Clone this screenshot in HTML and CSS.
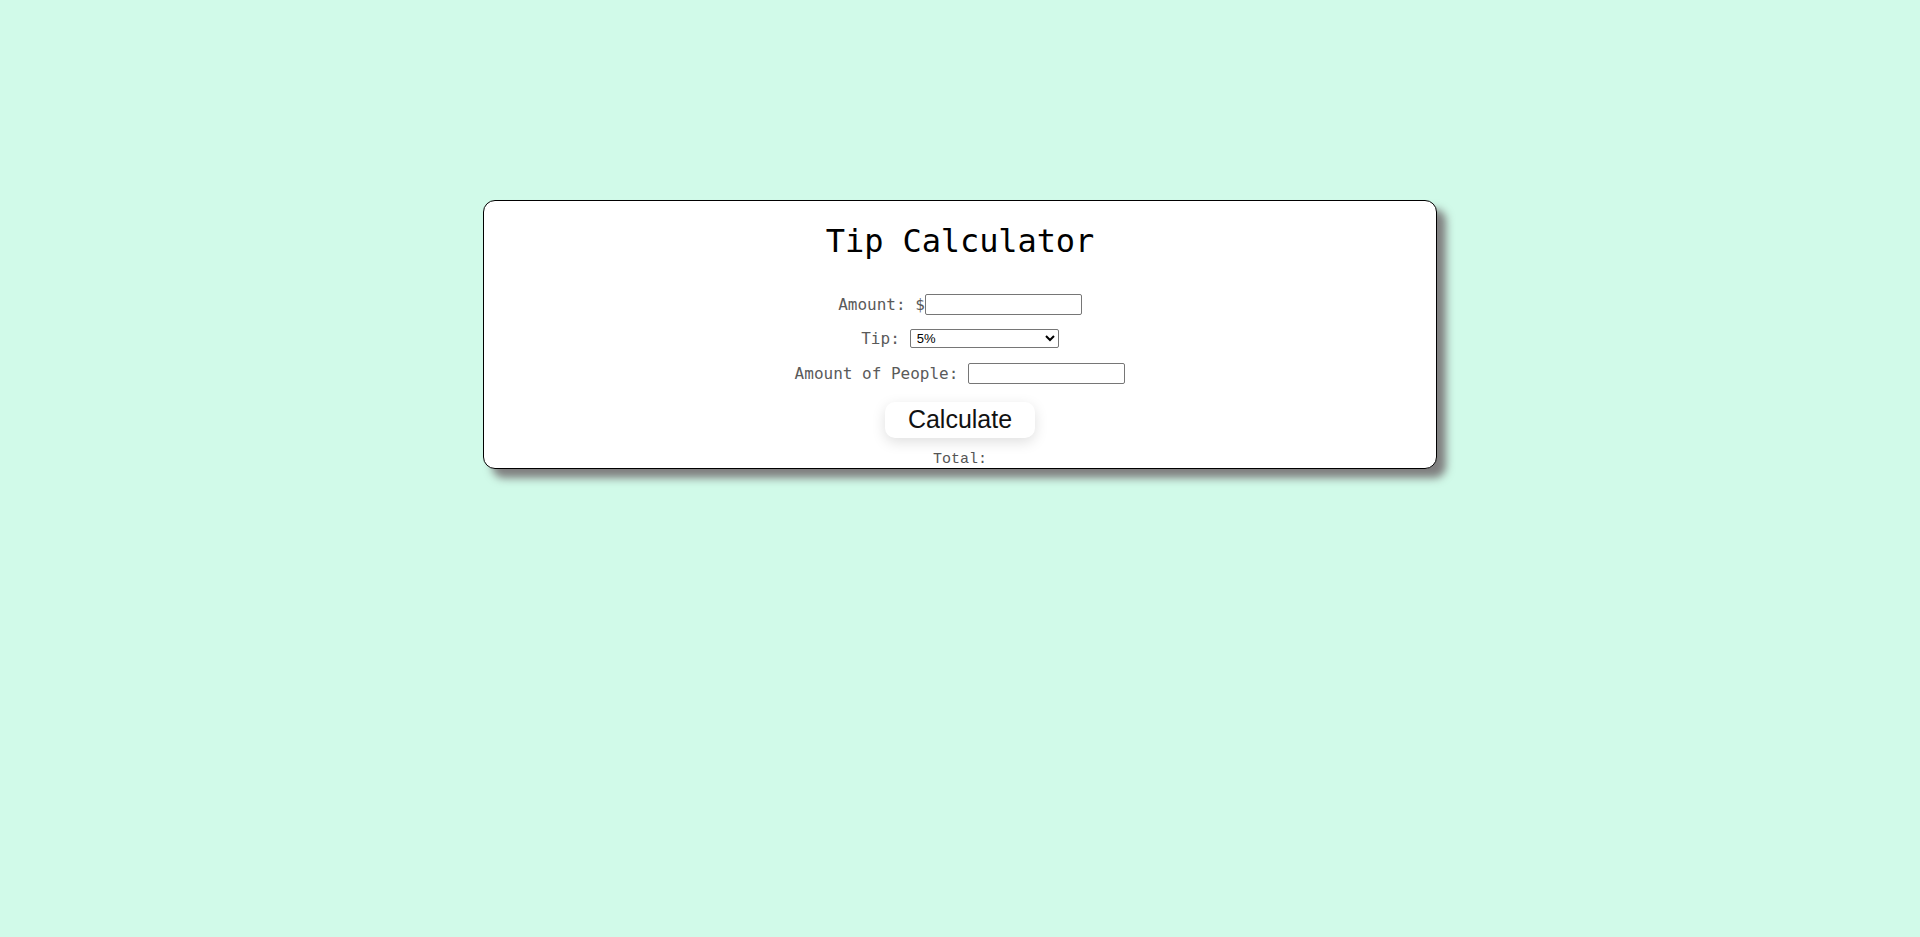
FILE: index.html
```html
<!DOCTYPE html>
<html lang="en">
<head>
<meta charset="utf-8">
<title>Tip Calculator</title>
<link rel="stylesheet" href="styles.css">
</head>
<body>
  <div class="card">
    <h1 class="title">Tip Calculator</h1>
    <div class="row">
      <label class="label" for="amount">Amount: $</label>
      <input class="field" id="amount" type="text">
    </div>
    <div class="row row-gap">
      <label class="label" for="tip">Tip:</label>
      <select class="select" id="tip">
        <option>5%</option>
        <option>10%</option>
        <option>15%</option>
        <option>20%</option>
      </select>
    </div>
    <div class="row row-gap">
      <label class="label" for="people">Amount of People:</label>
      <input class="field" id="people" type="text">
    </div>
    <button class="calc" type="button">Calculate</button>
    <div class="total">Total:</div>
  </div>
</body>
</html>
```

FILE: styles.css
```css
html {
  height: 100%;
  background: #d1fae9;
}
body {
  margin: 8px;
  min-height: calc(100% - 16px);
  background: #d1fae9;
  font-family: "DejaVu Sans Mono", monospace;
}
.card {
  width: 50%;
  height: 267px;
  margin: 192px auto 0;
  background: #fff;
  border: 1px solid #000;
  border-radius: 12px;
  box-shadow: 9px 9px 8px #7f7f7f;
  display: flex;
  flex-direction: column;
  align-items: center;
}
.title {
  font-family: "DejaVu Sans Mono", monospace;
  font-size: 32px;
  font-weight: normal;
  color: #000;
  margin: 22px 0 35px;
  line-height: 36px;
  letter-spacing: -0.1px;
}
.row {
  display: flex;
  align-items: center;
  justify-content: center;
  height: 21px;
  margin-bottom: 14px;
}
.row-gap {
  gap: 10px;
}
.label {
  font-size: 16px;
  color: #5a5a5a;
  white-space: pre;
}
.field {
  box-sizing: border-box;
  width: 157px;
  height: 21px;
  border: 1px solid #767676;
  border-radius: 2px;
  padding: 1px 2px;
  background: #fff;
  font-family: "Liberation Sans", Arial, sans-serif;
  font-size: 13px;
}
.select {
  box-sizing: border-box;
  width: 149px;
  height: 19px;
  border: 1px solid #767676;
  border-radius: 2px;
  background: #fff;
  font-family: "Liberation Sans", Arial, sans-serif;
  font-size: 13px;
  color: #000;
  padding: 0 0 0 2px;
}
.calc {
  box-sizing: border-box;
  width: 150px;
  height: 39px;
  margin-top: 4px;
  border: none;
  border-radius: 10px;
  background: #fff;
  box-shadow: 0 4px 14px rgba(0, 0, 0, 0.13);
  font-family: "Liberation Sans", Arial, sans-serif;
  font-size: 25px;
  color: #111;
  padding: 0;
  cursor: pointer;
}
.total {
  margin-top: 13px;
  font-family: "Liberation Mono", monospace;
  font-size: 15px;
  line-height: 17px;
  color: #555;
}
```
